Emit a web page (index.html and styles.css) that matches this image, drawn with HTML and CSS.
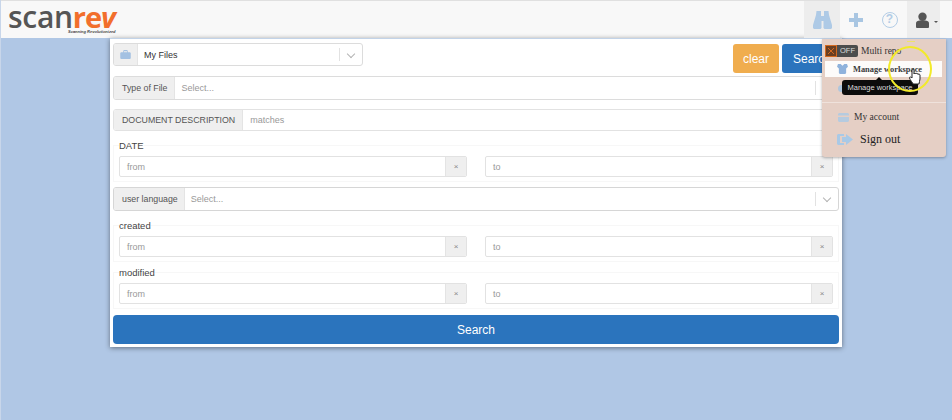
FILE: index.html
```html
<!DOCTYPE html>
<html lang="en">
<head>
<meta charset="utf-8">
<title>scanrev</title>
<link rel="stylesheet" href="styles.css">
</head>
<body>
<div class="page">
  <header class="topbar">
    <div class="logo">
      <div class="logo-word"><span class="scan">scan</span><span class="rev">re<i>v</i></span></div>
      <div class="tagline">Scanning Revolutionized</div>
    </div>
    <nav class="nav">
      <div class="nav-item nav-bino">
        <svg width="19" height="18" viewBox="0 0 19 18"><path fill="#aecae6" d="M3.500 0H8v5h3V0h4.500l.5 4 3 10v3l-1 1h-6.500l-1-1v-7H8.500v7l-1 1H1l-1-1v-3L3 4z"/></svg>
      </div>
      <div class="nav-item nav-plus">
        <svg width="16" height="16" viewBox="0 0 16 16"><path fill="#a9c6e2" d="M6 1h4v5h5v4h-5v5H6v-5H1V6h5z"/></svg>
      </div>
      <div class="nav-item nav-help">
        <span class="help">?</span>
      </div>
      <div class="nav-item nav-user">
        <svg width="13" height="16" viewBox="0 0 14 17"><circle cx="7" cy="5" r="4.500" fill="#555"/><path fill="#555" d="M0 16v-4c0-2 2-3 4-3h6c2 0 4 1 4 3v4c0 .6-.4 1-1 1H1c-.6 0-1-.4-1-1z"/></svg>
        <span class="caret"></span>
      </div>
    </nav>
  </header>

  <main class="panel">
    <div class="top-row">
      <div class="group group-files">
        <span class="addon addon-icon">
          <svg width="11" height="9" viewBox="0 0 14 12"><path fill="#a3c1e2" d="M5 0h4l1 1v2h3l1 1v7l-1 1H1l-1-1V4l1-1h3V1zm0 1.500V3h4V1.500z"/></svg>
        </span>
        <span class="field field-dark">My Files</span>
        <span class="chev"></span>
      </div>
      <div class="actions">
        <button class="btn btn-clear">clear</button>
        <button class="btn btn-search">Search</button>
      </div>
    </div>

    <div class="group row-file">
      <span class="addon">Type of File</span>
      <span class="field">Select...</span>
      <span class="chev"></span>
    </div>

    <div class="group row-desc">
      <span class="addon">DOCUMENT DESCRIPTION</span>
      <span class="field">matches</span>
    </div>

    <fieldset class="range range-date">
      <legend>DATE</legend>
      <div class="range-inputs">
        <div class="date-input"><span class="field">from</span><span class="clear-x">×</span></div>
        <div class="date-input"><span class="field">to</span><span class="clear-x">×</span></div>
      </div>
    </fieldset>

    <div class="group row-lang">
      <span class="addon">user language</span>
      <span class="field">Select...</span>
      <span class="chev"></span>
    </div>

    <fieldset class="range range-created">
      <legend>created</legend>
      <div class="range-inputs">
        <div class="date-input"><span class="field">from</span><span class="clear-x">×</span></div>
        <div class="date-input"><span class="field">to</span><span class="clear-x">×</span></div>
      </div>
    </fieldset>

    <fieldset class="range range-modified">
      <legend>modified</legend>
      <div class="range-inputs">
        <div class="date-input"><span class="field">from</span><span class="clear-x">×</span></div>
        <div class="date-input"><span class="field">to</span><span class="clear-x">×</span></div>
      </div>
    </fieldset>

    <button class="btn btn-wide">Search</button>
  </main>

  <aside class="menu">
    <div class="menu-repo">
      <svg class="repo-icon" width="12" height="12" viewBox="0 0 12 12"><rect x=".5" y=".5" width="11" height="11" fill="#6b3f22" stroke="#d5691f"/><path fill="none" stroke="#d5691f" d="M3 3l6 6M9 3l-6 6"/></svg>
      <span class="toggle">OFF</span><span class="menu-text">Multi repo</span>
    </div>
    <div class="menu-manage">
      <svg width="11" height="10" viewBox="0 0 12 11"><path fill="#8fb2dc" d="M1 0h3l2 2 2-2h3l1 3-2 2v5l-1 1H3l-1-1V5L0 3z"/></svg>
      <span>Manage workspace</span>
    </div>
    <div class="menu-gap"><span class="gap-dot"></span></div>
    <div class="menu-sep"></div>
    <div class="menu-account">
      <svg width="11" height="9" viewBox="0 0 11 9"><path fill="#b5cbe0" d="M1 0h9l1 1v7l-1 1H1L0 8V1zm-1 2.500v1.500h11V2.500z"/></svg>
      <span>My account</span>
    </div>
    <div class="menu-signout">
      <svg width="16" height="13" viewBox="0 0 16 13"><path fill="#a9c9e6" d="M1 1h6v2H3v7h4v2H1L0 11V2zm8 0 7 5.500-7 5.500V9H5V4h4z"/></svg>
      <span>Sign out</span>
    </div>
  </aside>

  <div class="tooltip">Manage workspace</div>
  <div class="highlight"></div>
  <svg class="hand" width="12" height="17" viewBox="0 0 12 17"><path fill="#fff" stroke="#222" stroke-width="1" d="M3 8V2c0-1.500 2-1.500 2 0v4c0-1 2-1 2 0 0-1 2-1 2 .5 0-.8 2-.5 2 .5v4c0 2-1 3-1 5H4c0-1-3-4-3.500-6C0 9 2 8.500 3 10z"/></svg>
</div>
</body>
</html>
```

FILE: styles.css
```css
* { box-sizing: border-box; }
html, body { margin: 0; padding: 0; }
body {
  width: 952px;
  height: 420px;
  overflow: hidden;
  font-family: "Liberation Sans", Arial, sans-serif;
  font-size: 10px;
  color: #444;
}
.page {
  position: relative;
  width: 952px;
  height: 420px;
  overflow: hidden;
  background: #b0c7e5;
  border-left: 1px solid #c8d6ea;
}

/* top bar */
.topbar {
  display: flex;
  align-items: stretch;
  height: 38px;
  background: #f8f8f8;
  border-top: 1px solid #e0e0e0;
  margin-left: -1px;
}
.logo { padding: 3px 0 0 8px; width: 140px; position: relative; }
.logo-word {
  font-family: "Open Sans", sans-serif;
  font-size: 30px;
  font-weight: 600;
  line-height: 26px;
  letter-spacing: -0.3px;
}
.scan { color: #555; }
.rev { color: #f26f2c; font-weight: 700; font-size: 29px; letter-spacing: -1px; }
.rev i { font-style: italic; }
.tagline {
  position: absolute;
  left: 68px;
  top: 28px;
  font-size: 4px;
  line-height: 5px;
  font-style: italic;
  font-weight: 700;
  color: #444;
  white-space: nowrap;
}
.nav { display: flex; margin-left: auto; margin-right: 12px; }
.nav-item { display: flex; align-items: center; justify-content: center; }
.nav-bino { width: 36px; background: #ededed; }
.nav-plus { width: 32px; }
.nav-help { width: 35px; }
.nav-user { width: 33px; background: #ededed; gap: 5px; justify-content: flex-start; padding-left: 9px; }
.help {
  width: 16px;
  height: 16px;
  border: 1.500px solid #b3cde6;
  border-radius: 50%;
  color: #b3cde6;
  font-size: 12px;
  font-weight: 700;
  line-height: 13px;
  text-align: center;
}
.caret {
  margin-top: 4px;
  border-top: 2px solid #555;
  border-left: 2px solid transparent;
  border-right: 2px solid transparent;
}

/* panel */
.panel {
  width: 732px;
  height: 309px;
  margin-left: 109px;
  padding: 4px 3px 3px;
  background: #fff;
  border-top: 1px solid #c2d3e8;
  box-shadow: 0 1px 5px rgba(0, 0, 0, 0.45);
}
.top-row { display: flex; height: 33px; align-items: flex-start; justify-content: space-between; }
.group {
  display: flex;
  align-items: stretch;
  border: 1px solid #dcdcdc;
  border-radius: 3px;
  background: #fff;
  overflow: hidden;
}
.group-files { width: 250px; height: 23px; }
.addon {
  display: flex;
  align-items: center;
  padding: 0 7px 0 8px;
  background: #efefef;
  border-right: 1px solid #e4e4e4;
  color: #555;
  font-size: 8.800px;
  white-space: nowrap;
}
.addon-icon { width: 24px; padding: 0; justify-content: center; }
.field {
  flex: 1;
  display: flex;
  align-items: center;
  padding-left: 6px;
  color: #999;
  font-size: 9px;
  white-space: nowrap;
}
.date-input .field { padding-left: 7px; }
.field-dark { color: #333; padding-left: 6px; }
.chev {
  position: relative;
  width: 23px;
  margin: 4px 0;
  border-left: 1px solid #e2e2e2;
}
.chev::after {
  content: "";
  position: absolute;
  left: 8px;
  top: 3px;
  width: 5px;
  height: 5px;
  border-right: 1px solid #b4b4b4;
  border-bottom: 1px solid #b4b4b4;
  transform: rotate(45deg);
}
.actions { display: flex; gap: 3px; margin-top: 1px; }
.btn {
  border: 0;
  border-radius: 3px;
  color: #fff;
  font-family: inherit;
  font-size: 12px;
  padding: 0;
}
.btn-clear { width: 46px; height: 29px; background: #f0ad4e; }
.btn-search { width: 57px; height: 29px; background: #2b74bd; text-align: left; padding-left: 11px; }
.row-file { height: 24px; }
.row-desc { height: 22px; margin-top: 9px; border-color: #e2e2e2; }
.row-desc .field { padding-left: 7px; }
.row-lang { height: 24px; margin-top: 5px; border-color: #d6d6d6; }
.row-lang .addon { padding-right: 6px; }

/* date ranges */
.range {
  margin: 0;
  padding: 5px 5px 4px;
  min-width: 0;
  border: 1px solid #f7f7f7;
}
.range legend {
  padding: 0;
  font-size: 9.500px;
  line-height: 11px;
  color: #444;
}
.range-date { margin-top: 9px; }
.range-created { margin-top: 9px; }
.range-modified { margin-top: 5px; }
.range-inputs {
  display: flex;
  justify-content: space-between;
}
.date-input {
  display: flex;
  width: 348px;
  height: 21px;
  border: 1px solid #e2e2e2;
  border-radius: 2px;
  overflow: hidden;
}
.clear-x {
  width: 21px;
  display: flex;
  align-items: center;
  justify-content: center;
  background: #efefef;
  border-left: 1px solid #e4e4e4;
  color: #888;
  font-size: 8px;
}
.btn-wide {
  display: block;
  width: 726px;
  height: 29px;
  margin-top: 6px;
  background: #2b74bd;
  border-radius: 4px;
  font-size: 12px;
}

/* dropdown */
.menu {
  position: absolute;
  left: 821px;
  top: 39px;
  width: 124px;
  height: 118px;
  padding: 5px 4px 0 3px;
  background: #e5cfc5;
  border-radius: 0 0 3px 3px;
  box-shadow: 0 1px 3px rgba(0, 0, 0, 0.3);
  font-family: "Liberation Serif", serif;
  color: #333;
}
.menu-repo { display: flex; align-items: center; height: 13px; font-size: 9.500px; }
.repo-icon { flex: none; }
.toggle {
  width: 21px;
  height: 12px;
  background: #4c4c4c;
  border-radius: 0 2px 2px 0;
  color: #ddd;
  font-family: "Liberation Sans", sans-serif;
  font-size: 7.500px;
  line-height: 12px;
  text-align: center;
  margin-right: 3px;
}
.menu-manage {
  display: flex;
  align-items: center;
  gap: 5px;
  height: 16px;
  margin-top: 4px;
  padding-left: 12px;
  background: #fdfbfa;
  font-size: 8.400px;
  font-weight: 700;
  color: #3a3a3a;
  white-space: nowrap;
}
.menu-gap { height: 25px; padding: 8px 0 0 13px; }
.gap-dot {
  display: block;
  width: 7px;
  height: 7px;
  border-radius: 50%;
  background: #aec6de;
}
.menu-sep { height: 1px; margin: 0 -4px 0 -3px; background: #efe2dc; }
.menu-account {
  display: flex;
  align-items: center;
  gap: 5px;
  margin-top: 8px;
  padding-left: 13px;
  height: 12px;
  font-size: 9.500px;
}
.menu-signout {
  display: flex;
  align-items: center;
  gap: 7px;
  margin-top: 9px;
  padding-left: 12px;
  height: 14px;
  font-size: 12px;
  color: #222;
}

/* overlays */
.tooltip {
  position: absolute;
  left: 841px;
  top: 80px;
  width: 76px;
  height: 15px;
  background: #0c0c0c;
  border-radius: 3px;
  color: #ddd;
  font-family: "Liberation Sans", sans-serif;
  font-size: 7.500px;
  line-height: 15px;
  text-align: center;
  white-space: nowrap;
}
.tooltip::before {
  content: "";
  position: absolute;
  left: 34px;
  top: -3px;
  border-bottom: 3px solid #0c0c0c;
  border-left: 3px solid transparent;
  border-right: 3px solid transparent;
}
.highlight {
  position: absolute;
  left: 887px;
  top: 46px;
  width: 44px;
  height: 46px;
  border: 2px solid #f2ea2a;
  border-radius: 50%;
}
.highlight::before {
  content: "";
  position: absolute;
  left: 17px;
  top: -7px;
  width: 8px;
  height: 1px;
  background: #efe26a;
}
.hand { position: absolute; left: 908px; top: 68px; }
```
